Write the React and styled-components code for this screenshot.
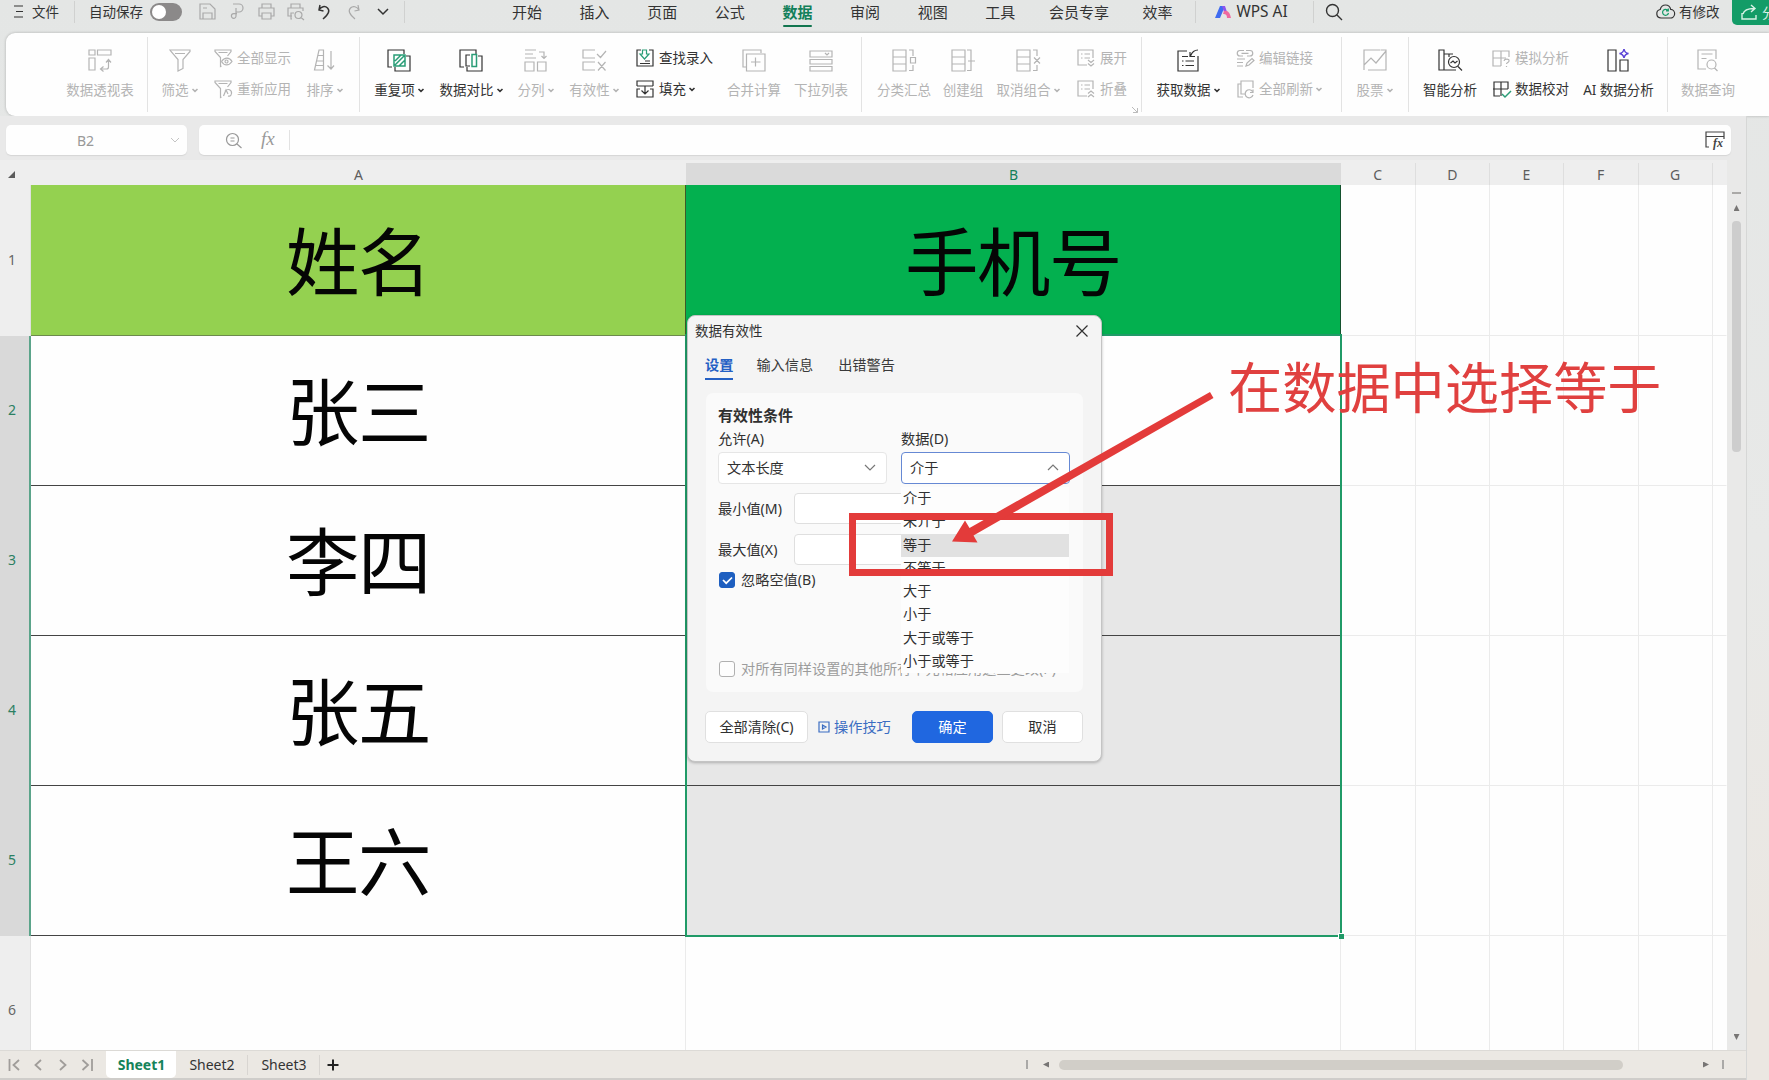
import React from "react";
import styled, { createGlobalStyle, css } from "styled-components";

const GlobalStyle = createGlobalStyle`
  * {
    box-sizing: border-box;
  }

  body {
    margin: 0;
    overflow: hidden;
    font-family: "Noto Sans", "Noto Sans CJK SC", sans-serif;
    color: #333;
  }
`;

const icons = {
  menu: <path d="M1 2h9M3 7.5h7M1 13h9" />,
  save: <path d="M1 1h10l5 5v10H1zM4 16v-6h9v6M4 5h4" />,
  brush: <path d="M4 1h6a4 4 0 0 1 0 8H7M7 5v8a2.3 2.3 0 1 1-2.3-2.3H8" />,
  print: <path d="M4 5V1h9v4M4 13H1V5h15v8h-3M4 10h9v6H4z" />,
  preview: (
    <path d="M4 5V1h9v4M5 13H1V5h15v3M5 16H4v-6h3M15 12a3.5 3.5 0 1 1-7 0a3.5 3.5 0 0 1 7 0M14 14.5l3 2.5" />
  ),
  undo: <path d="M3 1L2 6l4.5 1M2 6c2-3.5 6-4.5 8.5-2s1.5 6-4.5 11" />,
  redo: <path d="M11 1l1 5-4.5 1M12 6c-2-3.5-6-4.500-8.500-2s-1.500 6 4.500 11" />,
  down: <path d="M1 5l5 5 5-5" />,
  up: <path d="M1 10l5-5 5 5" />,
  search: <path d="M13.5 7.5a6 6 0 1 1-12 0a6 6 0 0 1 12 0M12 12l5 5" />,
  zoomOut: (
    <path d="M13.5 7.5a6 6 0 1 1-12 0a6 6 0 0 1 12 0M12 12l4.5 4M5.5 6h4M5.5 9h4" />
  ),
  cloud: (
    <>
      <path d="M5 15a4.3 4.3 0 0 1-.8-8.5C5 3.5 7 2 9.5 2s4.6 1.6 5.200 4.400A4.300 4.300 0 0 1 14 15z" />
      <path stroke="#159a68" d="M12 7.5A3 3 0 1 0 12.5 10M12.3 5.5v2.3h-2.3" />
    </>
  ),
  share: <path d="M2 9v6h14v-4M3 10c1-4 5-5.5 11-5.5M11 1l4 3.5L11 8" />,
  pivot: (
    <path d="M1 2h6v5H1zM9.5 2H23v5H9.5zM1 10h6v12H1zM20.5 12v7a2 2 0 0 1-2 2H13M18 14.5l2.5-3 2.5 3M15.5 18.5L12.5 21l3 2.5" />
  ),
  filter: <path d="M2 2h20v1.5l-7 8v9L10 23V11.5l-7-8zM7 5.5h10" />,
  filterEye: (
    <path d="M7.5 17l-1 .5v-9L1 2.5V1h16v1.5L13.5 7M4.5 3.5h9M7.500 12.500c3-4.500 8-4.500 10.500 0c-3 4.500-8 4.500-10.500 0M14 12.5a1.5 1.5 0 1 1-3 0a1.5 1.5 0 0 1 3 0" />
  ),
  filterRe: (
    <path d="M7.5 17l-1 .5v-9L1 2.5V1h16v1.5L13.5 7M4.5 3.5h9M9.500 16l2.500-6 2 4M11 11c3-3 7-1 6.500 2.500S14 16 14 16" />
  ),
  sort: (
    <path d="M6 2h4.5v20H1.5zM5 7.5h5.5M3.5 13h7M2.5 17.5h8M18 3v18M14.500 17.500L18 21l3-3.500" />
  ),
  dup: (
    <>
      <path d="M5 19H1V2h16v4M8 19v4h15V8h-4" />
      <path stroke="#2a9d77" strokeWidth="1.500" d="M7 7h11v11H7zM8 13l6-6M8 17l9-9M12 18l6-6" />
    </>
  ),
  compare: (
    <>
      <path d="M5 19H1V2h16v4M11 7H7v11h4M8 19v4h15V8h-4" />
      <path stroke="#2a9d77" strokeWidth="1.500" d="M13 6.500h4.500v12H13z" />
    </>
  ),
  split: (
    <path d="M1 2h11M1 6h8M1 10h11M15 4h5v6M17.5 8l2.5 2.5L22.5 8M1 14h9v9H1zM13.5 14H22v9h-8.5z" />
  ),
  valid: <path d="M13 2H1v8h12M15 6l3.5 3.5L24 3M13 14H1v8h12M16 14l7.5 8.5M23.5 14L16 22.5" />,
  lookup: (
    <>
      <path d="M5 1H1v16h16V1h-4M4 14.5h10M9 12h5" />
      <path stroke="#2a9d77" d="M6.5 1h4v4H13L8.500 10 4 5h2.500z" />
    </>
  ),
  fill: <path d="M1 6V1h16v5M1 6h16M4 9H1v8h16V9h-3M9 6v8M5.500 10.500L9 14l3.500-3.500" />,
  merge: <path d="M4 19H1V2h18v3M4.5 6H23v17H4.5zM13.5 9.5v9M9 14h9.5" />,
  list: <path d="M1 3h22v6H1zM1 11.5h22V16H1zM1 18.5h22V23H1zM16 5l2 2 2-2" />,
  subtotal: (
    <path d="M1 2h13v21H1zM1 9h13M1 16h13M17 2h4v6M21 17v5.5h-4M18.5 9.500h5v5.500h-5z" />
  ),
  group: <path d="M1 2h13v21H1zM1 9h13M1 16h13M16 2h4v20.5h-4M17 13h7" />,
  ungroup: (
    <path d="M1 2h13v21H1zM1 9h13M1 16h13M17 2h4v6M21 17v5.5h-4M18 9.5l6 6M24 9.5l-6 6" />
  ),
  expand: (
    <path d="M10 16H1V1h15v8M4 5h1.5M7.5 5H13M4 9h1.5M7.5 9H13M11 11l3 2.5 3-2.5M11 14.500l3 2.500 3-2.500" />
  ),
  collapse: (
    <path d="M10 16H1V1h15v8M4 5h1.5M7.5 5H13M4 9h1.5M7.5 9H13M11 13.5l3-2.5 3 2.5M11 17l3-2.5 3 2.5" />
  ),
  fetch: (
    <path d="M11 3H2v20h20V8M6 8.5h6M6 13h1.5M9.5 13H18M6 17.5h1.5M9.5 17.5H18M22 2c-4 0-6 2-7.500 6M14 4v4.500h5" />
  ),
  link: (
    <path d="M8 1.500H4a2.700 2.700 0 0 0 0 5.500h3M10 1.500h4A2.700 2.700 0 0 1 14 7h-3M5.500 4.300h7M1 10h8M1 13.5h6M1 17h6M10 17l1-3 5-4.5 2 2-5 4.5z" />
  ),
  refresh: (
    <path d="M5 4H2v13h5M9 14H5V1h12v7M16.5 11.5A4 4 0 1 0 17 15M17 9.5v3h-3" />
  ),
  stock: <path d="M17 2H1v20M5 22h18V8M1 17l7-7 5 5L23 3M17.5 2H23v6" />,
  smart: (
    <path d="M1 2h5v20H1zM6 6h5v3M6 22h12M11 6h4M21.500 14a5.500 5.500 0 1 1-11 0a5.500 5.500 0 0 1 11 0M20 18.500l4 4M12.500 15l2.500-2 2 2 2.500-2" />
  ),
  simulate: (
    <path d="M9 17H1V2h16v6M9 2v15M1 9h13M12 12c.5-2.500 5.500-2.500 5 0c0 1.500-2.500 1.500-2.500 3M14.500 17v1" />
  ),
  check: (
    <>
      <path d="M8 16H2V2h14v7M9 2v14M1 9h15" />
      <path stroke="#2a9d77" strokeWidth="1.500" d="M10 14l3 3 6-6" />
    </>
  ),
  aiData: (
    <>
      <path d="M1 2h8v21H1zM13 12h8v11h-8z" />
      <path
        stroke="#5b43d6"
        strokeWidth="1.500"
        d="M17 1c.5 3 1.500 4 4.500 4.500c-3 .5-4 1.500-4.500 4.500c-.5-3-1.500-4-4.500-4.500c3-.5 4-1.500 4.500-4.500z"
      />
    </>
  ),
  query: (
    <path d="M10 21H2V2h18v9M5.5 6h11M5.5 10.5h5M20 16.5a4.5 4.5 0 1 1-9 0a4.5 4.5 0 0 1 9 0M18.5 20l3 3" />
  ),
  close: <path d="M1.5 1.5l11 11M12.5 1.5l-11 11" />,
  tick: <path strokeWidth="1.7" d="M3 7l3.2 3.2L12 4.5" />,
  play: <path d="M1 1h10v10H1zM4.5 4v4L8 6z" />,
  launcher: <path d="M1 1l5.5 5.5M6.5 2v4.5H2" />,
  first: <path d="M1.5 1v12M11 2L5.5 7 11 12" />,
  prev: <path d="M8 2L2.5 7 8 12" />,
  next: <path d="M3 2l5.5 5L3 12" />,
  last: <path d="M1.5 2L7 7l-5.5 5M11 1v12" />,
  plus: <path d="M6 .5v11M.5 6h11" />,
};

const Svg = styled.svg`
  display: block;
  flex: none;
  fill: none;
  stroke: currentColor;
  stroke-width: ${(props) => props.$stroke || 1.2};
  overflow: visible;
`;

const Icon = ({ name, size = 18, height, stroke }) => (
  <Svg
    width={size}
    height={height || size}
    viewBox={`0 0 ${size} ${height || size}`}
    $stroke={stroke}
  >
    {icons[name]}
  </Svg>
);

const Window = styled.div`
  position: relative;
  width: 1769px;
  height: 1080px;
  overflow: hidden;
  display: flex;
  flex-direction: column;
  background: linear-gradient(#e4e6e5, #e8e9e8 50%, #ebe7e2 90%);
`;

/* ---------- title bar ---------- */

const TitleBar = styled.header`
  display: flex;
  align-items: center;
  height: 23px;
  margin-bottom: 10px;
  padding-left: 13px;
  font-size: 13.5px;
  line-height: 20px;
  white-space: nowrap;
  flex: none;
`;

const TitleItem = styled.div`
  display: flex;
  align-items: center;
  flex: none;
  width: ${(props) => props.$w}px;
  color: ${(props) => (props.$muted ? "#a9a9a9" : "#333")};
  gap: ${(props) => props.$gap ?? 8}px;
`;

const TitleRule = styled.i`
  width: 1px;
  height: 22px;
  background: #d0d1d0;
  margin: 0 ${(props) => props.$r}px 0 ${(props) => props.$l || 0}px;
`;

const Toggle = styled.span`
  width: 32px;
  height: 18px;
  border-radius: 9px;
  background: #8b8989;
  padding: 2px;

  &::before {
    content: "";
    display: block;
    width: 14px;
    height: 14px;
    border-radius: 50%;
    background: #fff;
  }
`;

const MenuTabs = styled.nav`
  display: flex;
  gap: 37.6px;
  font-size: 15px;
  margin-left: 107px;
`;

const MenuTab = styled.span`
  position: relative;
  color: #333;
  margin-left: ${(props) => props.$ml || 0}px;

  ${(props) =>
    props.$active &&
    css`
      color: #12805a;
      font-weight: 700;

      &::after {
        content: "";
        position: absolute;
        left: 1px;
        right: 0;
        bottom: -5px;
        height: 2px;
        border-radius: 1px;
        background: #12754f;
      }
    `}
`;

const AiName = styled.span`
  font-size: 15.4px;
`;

const ShareButton = styled.div`
  align-self: flex-start;
  height: 25px;
  width: 37px;
  flex: none;
  margin-left: 13px;
  padding-left: 8px;
  display: flex;
  align-items: center;
  gap: 5px;
  overflow: hidden;
  color: #d8f2e6;
  background: #139c67;
  border-radius: 0 0 0 5px;
`;

/* ---------- ribbon ---------- */

const Ribbon = styled.section`
  display: flex;
  align-items: stretch;
  flex: none;
  height: 83px;
  margin-left: 6px;
  padding: 4px 0;
  background: #fefefe;
  border-radius: 9px 0 0 9px;
  box-shadow: 0 0 3px rgba(0, 0, 0, 0.25);
`;

const Group = styled.div`
  position: relative;
  display: flex;
  flex: none;
  width: ${(props) => props.$w}px;
  border-right: 1px solid #e3e3e3;

  &:last-child {
    border-right: 0;
  }
`;

const Tool = styled.div`
  display: flex;
  flex-direction: column;
  align-items: center;
  flex: none;
  width: ${(props) => props.$w}px;
  margin-left: ${(props) => props.$ml}px;
  padding-top: 11px;
  gap: 9px;
  color: ${(props) => (props.$on ? "#333" : "#b4b4b4")};
`;

const ToolStack = styled.div`
  display: flex;
  flex-direction: column;
  flex: none;
  width: ${(props) => props.$w}px;
  margin-left: ${(props) => props.$ml}px;
  padding-top: 11px;
  gap: 11px;
`;

const StackRow = styled.div`
  display: flex;
  align-items: center;
  height: 20px;
  gap: 5px;
  color: ${(props) => (props.$on ? "#333" : "#b4b4b4")};
`;

const ToolLabel = styled.span`
  display: flex;
  align-items: center;
  gap: 3px;
  font-size: 13.5px;
  line-height: 18px;
  white-space: nowrap;
`;

const Caret = () => (
  <Svg width="6" height="6" viewBox="0 0 6 6" $stroke={1.6}>
    <path d="M.5 2L3 4.3 5.5 2" />
  </Svg>
);

const Launcher = styled.span`
  position: absolute;
  right: 3px;
  bottom: -1px;
  color: #bbb;
`;

const ribbonGroups = [
  { w: 142, tools: [{ ml: 60, w: 68, icon: "pivot", label: "数据透视表" }] },
  {
    w: 212,
    tools: [
      { ml: 13, w: 37, icon: "filter", label: "筛选", caret: true },
      {
        ml: 16,
        w: 79,
        rows: [
          { icon: "filterEye", label: "全部显示" },
          { icon: "filterRe", label: "重新应用" },
        ],
      },
      { ml: 13, w: 37, icon: "sort", label: "排序", caret: true },
    ],
  },
  {
    w: 502,
    tools: [
      { ml: 14, w: 50, icon: "dup", label: "重复项", caret: true, on: true },
      { ml: 15, w: 64, icon: "compare", label: "数据对比", caret: true, on: true },
      { ml: 14, w: 37, icon: "split", label: "分列", caret: true },
      { ml: 15, w: 50, icon: "valid", label: "有效性", caret: true },
      {
        ml: 17,
        w: 76,
        rows: [
          { icon: "lookup", label: "查找录入", on: true },
          { icon: "fill", label: "填充", caret: true, on: true },
        ],
      },
      { ml: 15, w: 54, icon: "merge", label: "合并计算" },
      { ml: 13, w: 54, icon: "list", label: "下拉列表" },
    ],
  },
  {
    w: 280,
    launcher: true,
    tools: [
      { ml: 15, w: 54, icon: "subtotal", label: "分类汇总" },
      { ml: 12, w: 40, icon: "group", label: "创建组" },
      { ml: 13, w: 64, icon: "ungroup", label: "取消组合", caret: true },
      {
        ml: 17,
        w: 50,
        rows: [
          { icon: "expand", label: "展开" },
          { icon: "collapse", label: "折叠" },
        ],
      },
    ],
  },
  {
    w: 200,
    tools: [
      { ml: 14, w: 64, icon: "fetch", label: "获取数据", caret: true, on: true },
      {
        ml: 16,
        w: 90,
        rows: [
          { icon: "link", label: "编辑链接" },
          { icon: "refresh", label: "全部刷新", caret: true },
        ],
      },
    ],
  },
  { w: 67, tools: [{ ml: 14, w: 37, icon: "stock", label: "股票", caret: true }] },
  {
    w: 259,
    tools: [
      { ml: 14, w: 54, icon: "smart", label: "智能分析", on: true },
      {
        ml: 15,
        w: 77,
        rows: [
          { icon: "simulate", label: "模拟分析" },
          { icon: "check", label: "数据校对", on: true },
        ],
      },
      { ml: 14, w: 71, icon: "aiData", label: "AI 数据分析", on: true },
    ],
  },
  { w: 101, tools: [{ ml: 13, w: 54, icon: "query", label: "数据查询" }] },
];

/* ---------- formula bar ---------- */

const Workspace = styled.div`
  width: 1747px;
  flex: 1;
  min-height: 0;
  display: flex;
  flex-direction: column;
  border-right: 1px solid #d6d7d6;
  background: #ededed;
`;

const FormulaBar = styled.div`
  display: flex;
  gap: 12px;
  flex: none;
  height: 44px;
  padding: 9px 15px 5px 6px;
  background: #e9e9e9;
`;

const FormulaBox = styled.div`
  display: flex;
  align-items: center;
  width: ${(props) => props.$w}px;
  flex: ${(props) => (props.$w ? "none" : 1)};
  background: #fefefe;
  border-radius: 5px;
  box-shadow: 0 1px 1px #d5d5d5;
  padding: 0 ${(props) => props.$pr}px 0 ${(props) => props.$pl}px;
  color: #999;
  font-size: 14px;
`;

const NameArrow = styled(Svg)`
  color: #c4c4c4;
`;

const Fx = styled.span`
  font-family: "Liberation Serif", serif;
  font-style: italic;
  font-size: 19px;
  line-height: 20px;
  margin: 0 14px 2px 19px;
`;

const FormulaRule = styled.i`
  width: 1px;
  height: 20px;
  background: #e2e2e2;
`;

const Spacer = styled.span`
  flex: 1;
`;

/* ---------- sheet ---------- */

const columnTemplate = "31px 655px 655px 74.5px 74.5px 74px 74.5px 74px 1fr";

const SheetArea = styled.div`
  display: flex;
  flex: 1;
  min-height: 0;
`;

const Sheet = styled.div`
  position: relative;
  width: 1727px;
  overflow: hidden;
  background: #fefefe;
`;

const HeadRow = styled.div`
  display: grid;
  grid-template-columns: ${columnTemplate};
  height: 25px;
  background: #eee;
`;

const HeadCell = styled.div`
  display: flex;
  align-items: center;
  justify-content: center;
  margin-top: 3px;
  font-size: 14px;
  color: ${(props) => (props.$active ? "#16805a" : "#5d5d5d")};
  background: ${(props) => (props.$active ? "#dadada" : "transparent")};
  border-right: ${(props) => (props.$rule ? "1px solid #dedede" : "0")};
`;

const SelectAll = styled.div`
  width: 0;
  height: 0;
  margin: 11px 0 0 8px;
  border-bottom: 7px solid #5b5b5b;
  border-left: 7px solid transparent;
`;

const Row = styled.div`
  display: grid;
  grid-template-columns: ${columnTemplate};
  height: ${(props) => (props.$first ? 151 : 150)}px;
`;

const RowHead = styled.div`
  display: flex;
  align-items: center;
  padding: 0 0 3px 8px;
  font-size: 14px;
  color: ${(props) => (props.$active ? "#2b7f62" : "#666")};
  background: ${(props) => (props.$active ? "#d9d9d9" : "#eee")};
  border-right: ${(props) =>
    props.$active ? "2px solid #5ba48a" : "1px solid #e0e0e0"};
`;

const Cell = styled.div`
  display: flex;
  align-items: center;
  justify-content: center;
  padding-bottom: 5px;
  font-family: "Noto Sans CJK SC", sans-serif;
  font-size: 73.5px;
  letter-spacing: -1.5px;
  line-height: 100px;
  color: #050505;
  background: ${(props) => props.$bg || "#fefefe"};
  border-right: 1px solid ${(props) => props.$side || "#ebebeb"};
  border-bottom: 1px solid ${(props) => props.$edge || "#ebebeb"};
`;

const Selection = styled.div`
  position: absolute;
  left: 685px;
  top: 174px;
  width: 657px;
  height: 603px;
  border: 2px solid #209a67;

  &::after {
    content: "";
    position: absolute;
    right: -4px;
    bottom: -4px;
    width: 5px;
    height: 5px;
    border: solid #fff;
    border-width: 1px 0 0 1px;
    background: #209a67;
  }
`;

const VScroll = styled.div`
  width: 19px;
  padding-top: 32px;
  display: flex;
  flex-direction: column;
  align-items: center;
  background: #e9e9e8;
`;

const SplitMark = styled.i`
  flex: none;
  width: ${(props) => props.$w}px;
  height: ${(props) => props.$h}px;
  background: #aaa9a7;
`;

const VThumb = styled.div`
  width: 9px;
  height: 231px;
  margin: 10px 0 auto;
  border-radius: 4px;
  background: #cdcdcd;
`;

const Triangle = styled.span`
  width: 6px;
  height: 6px;
  flex: none;
  background: #777574;
  margin: ${(props) => props.$m || 0};
  clip-path: polygon(${(props) => props.$shape});
`;

const SheetBar = styled.footer`
  display: flex;
  align-items: center;
  flex: none;
  height: 30px;
  padding: 0 22px 0 8px;
  border-top: 1px solid #dcdad6;
  border-bottom: 2px solid #cfcdca;
  background: #ebe8e3;
  font-size: 14px;
`;

const NavArrows = styled.div`
  display: flex;
  align-items: center;
  gap: 13px;
  width: 98px;
  color: #a09d9a;
`;

const SheetTab = styled.div`
  display: flex;
  align-items: center;
  justify-content: center;
  width: ${(props) => props.$w}px;
  height: ${(props) => (props.$active ? "27px" : "20px")};
  padding-left: 1px;
  color: ${(props) => (props.$active ? "#15835a" : "#333")};
  font-weight: ${(props) => (props.$active ? 700 : 400)};
  background: ${(props) => (props.$active ? "#fff" : "transparent")};
  border-right: ${(props) => (props.$active ? "0" : "1px solid #d8d5d1")};
  border-radius: ${(props) => (props.$active ? "0 0 5px 5px" : "0")};
`;

const AddSheet = styled.div`
  padding-left: 7px;
  color: #222;
`;

const HThumb = styled.div`
  width: 564px;
  height: 10px;
  border-radius: 5px;
  background: #d1cec8;
  margin-right: 80px;
`;

/* ---------- dialog ---------- */

const Dialog = styled.div`
  position: absolute;
  left: 687px;
  top: 315px;
  width: 415px;
  height: 447px;
  display: flex;
  flex-direction: column;
  background: #f4f4f4;
  border: 1px solid #c4c4c4;
  border-radius: 8px;
  box-shadow: 0 1px 3px rgba(0, 0, 0, 0.25);
  font-size: 14.2px;
  line-height: 20px;
  color: #303030;
  white-space: nowrap;
`;

const DialogTitle = styled.div`
  display: flex;
  align-items: center;
  justify-content: space-between;
  height: 29px;
  padding: 0 12px 0 7px;
  font-size: 13.5px;
`;

const DialogTabs = styled.div`
  display: flex;
  gap: 23px;
  height: 48px;
  padding: 10px 0 0 17px;
`;

const DialogTab = styled.span`
  height: 25px;
  margin-right: ${(props) => props.$mr || 0}px;
  color: ${(props) => (props.$active ? "#2460c4" : "#3a3a3a")};
  font-weight: ${(props) => (props.$active ? 700 : 400)};
  border-bottom: 2px solid ${(props) => (props.$active ? "#2460c4" : "transparent")};
`;

const Panel = styled.div`
  position: relative;
  display: flex;
  flex-direction: column;
  height: 299px;
  margin: 0 18px;
  padding: 12px 12px 0;
  background: #fafafa;
  border-radius: 7px;
`;

const PanelTitle = styled.b`
  height: 24px;
  font-size: 15px;
`;

const FieldPair = styled.div`
  display: grid;
  grid-template-columns: 169px 169px;
  column-gap: 14px;
`;

const Field = styled.label`
  display: flex;
  flex-direction: column;
  gap: 3px;
`;

const SelectBox = styled.div`
  display: flex;
  align-items: center;
  justify-content: space-between;
  height: 32px;
  padding: 0 10px 1px 8px;
  background: #fff;
  border: 1px solid ${(props) => (props.$open ? "#6689d4" : "#e6e6e6")};
  border-radius: 4px;

  svg {
    color: #777;
  }
`;

const InputRow = styled.div`
  display: grid;
  grid-template-columns: 76px 274px;
  align-items: center;
  margin-top: ${(props) => props.$mt}px;
`;

const InputBox = styled.div`
  height: 31px;
  background: #fff;
  border: 1px solid #dfdfdf;
  border-radius: 4px;
`;

const CheckRow = styled.div`
  display: flex;
  align-items: center;
  gap: 6px;
  padding-left: 1px;
  margin-top: ${(props) => props.$mt}px;
  color: ${(props) => (props.$muted ? "#9c9c9c" : "#333")};
`;

const CheckBox = styled.span`
  width: 16px;
  height: 16px;
  flex: none;
  border-radius: 3px;
  color: #fff;
  border: 1px solid ${(props) => (props.$checked ? "#1e5fc0" : "#b0b0b0")};
  background: ${(props) => (props.$checked ? "#1e5fc0" : "#fdfdfd")};
`;

const OptionList = styled.div`
  position: absolute;
  left: 195px;
  top: 94px;
  width: 168px;
  background: #fdfdfd;
`;

const Option = styled.div`
  height: 23.3px;
  padding-left: 2px;
  line-height: 22px;
  background: ${(props) => (props.$active ? "#e1e1e1" : "transparent")};
`;

const Actions = styled.div`
  display: flex;
  align-items: center;
  padding: 19px 0 0 17px;
`;

const Button = styled.button`
  width: ${(props) => props.$w}px;
  height: 32px;
  padding: 0;
  font: inherit;
  color: ${(props) => (props.$primary ? "#fff" : "#303030")};
  background: ${(props) => (props.$primary ? "#2067e0" : "#fff")};
  border: 1px solid ${(props) => (props.$primary ? "#2067e0" : "#e0e0e0")};
  border-radius: 5px;

  & + & {
    margin-left: 9px;
  }
`;

const TipsLink = styled.span`
  display: flex;
  align-items: center;
  gap: 4px;
  width: 94px;
  margin-left: 10px;
  color: #3b6dc2;
`;

/* ---------- annotation ---------- */

const Highlight = styled.div`
  position: absolute;
  left: 849px;
  top: 513px;
  width: 264px;
  height: 63px;
  border: 7px solid #e33b3a;
`;

const ArrowLayer = styled.svg`
  position: absolute;
  left: 940px;
  top: 380px;
`;

const Note = styled.div`
  position: absolute;
  left: 1228px;
  top: 345px;
  font-family: "Noto Sans CJK SC", sans-serif;
  font-size: 54.2px;
  line-height: 80px;
  color: #e0403f;
  white-space: nowrap;
`;

const menuTabs = [
  { title: "开始" },
  { title: "插入" },
  { title: "页面" },
  { title: "公式" },
  { title: "数据", active: true },
  { title: "审阅" },
  { title: "视图" },
  { title: "工具" },
  { title: "会员专享", ml: -4 },
  { title: "效率", ml: -4 },
];
const names = ["姓名", "张三", "李四", "张五", "王六", ""];
const columns = ["A", "B", "C", "D", "E", "F", "G", ""];
const options = [
  "介于",
  "未介于",
  "等于",
  "不等于",
  "大于",
  "小于",
  "大于或等于",
  "小于或等于",
];

const AiLogo = () => (
  <svg width="17" height="14" viewBox="0 0 17 14">
    <path d="M5 1h5L5 13H0z" fill="#3f6bf0" />
    <path d="M7 1h3l2 6H9z" fill="#8b54ee" />
    <path d="M9 6c4-1 6 2 7 7h-4c0-3-1-4-4-4z" fill="#ee6aa0" />
  </svg>
);

const TopMenu = () => (
  <TitleBar>
    <TitleItem $w={61}>
      <Icon name="menu" size={11} height={15} />
      文件
    </TitleItem>
    <TitleRule $r={14} />
    <TitleItem $w={110} $gap={7}>
      自动保存
      <Toggle />
    </TitleItem>
    <TitleItem $w={30} $muted>
      <Icon name="save" size={17} />
    </TitleItem>
    <TitleItem $w={29} $muted>
      <Icon name="brush" size={17} />
    </TitleItem>
    <TitleItem $w={29} $muted>
      <Icon name="print" size={17} />
    </TitleItem>
    <TitleItem $w={30} $muted>
      <Icon name="preview" size={17} />
    </TitleItem>
    <TitleItem $w={30}>
      <Icon name="undo" size={14} height={16} stroke={1.5} />
    </TitleItem>
    <TitleItem $w={30} $muted>
      <Icon name="redo" size={14} height={16} />
    </TitleItem>
    <TitleItem $w={27}>
      <Icon name="down" size={12} height={15} stroke={1.5} />
    </TitleItem>
    <TitleRule $r={0} />
    <MenuTabs>
      {menuTabs.map((tab) => (
        <MenuTab key={tab.title} $active={tab.active} $ml={tab.ml}>
          {tab.title}
        </MenuTab>
      ))}
    </MenuTabs>
    <TitleRule $l={22} $r={19} />
    <TitleItem $w={98} $gap={5}>
      <AiLogo />
      <AiName>WPS AI</AiName>
    </TitleItem>
    <TitleRule $r={11} />
    <TitleItem $w={18}>
      <Icon name="search" stroke={1.4} />
    </TitleItem>
    <Spacer />
    <TitleItem $w={63} $gap={5}>
      <Icon name="cloud" size={18} />
      有修改
    </TitleItem>
    <ShareButton>
      <Icon name="share" size={17} stroke={1.4} />
      分享
    </ShareButton>
  </TitleBar>
);

const RibbonTool = ({ tool }) => {
  if (tool.rows) {
    return (
      <ToolStack $ml={tool.ml} $w={tool.w}>
        {tool.rows.map((row) => (
          <StackRow key={row.label} $on={row.on}>
            <Icon name={row.icon} size={18} />
            <ToolLabel>
              {row.label}
              {row.caret && <Caret />}
            </ToolLabel>
          </StackRow>
        ))}
      </ToolStack>
    );
  }

  return (
    <Tool $ml={tool.ml} $w={tool.w} $on={tool.on}>
      <Icon name={tool.icon} size={24} />
      <ToolLabel>
        {tool.label}
        {tool.caret && <Caret />}
      </ToolLabel>
    </Tool>
  );
};

const cellColors = (row) => {
  if (row === 0) {
    return {
      a: { $bg: "#94d150", $side: "#3f5a28", $edge: "#6c8a4c" },
      b: { $bg: "#03b04f", $side: "#14512e" },
    };
  }
  if (row === 5) return { a: {}, b: {} };
  return {
    a: { $edge: "#444" },
    b: { $bg: row === 1 ? "#fefefe" : "#e7e7e7", $edge: "#444" },
  };
};

const Spreadsheet = () => (
  <Sheet>
    <HeadRow>
      <SelectAll />
      {columns.map((col, idx) => (
        <HeadCell key={idx} $active={col === "B"} $rule={idx > 1 && idx < 7}>
          {col}
        </HeadCell>
      ))}
    </HeadRow>
    {names.map((name, row) => {
      const colors = cellColors(row);
      return (
        <Row key={row} $first={row === 0}>
          <RowHead $active={row > 0 && row < 5}>{row + 1}</RowHead>
          <Cell {...colors.a}>{name}</Cell>
          <Cell {...colors.b}>{row === 0 ? "手机号" : ""}</Cell>
          {columns.slice(2).map((col, idx) => (
            <Cell key={idx} $side={idx === 5 ? "transparent" : undefined} />
          ))}
        </Row>
      );
    })}
    <Selection />
  </Sheet>
);

const ValidationDialog = () => (
  <Dialog>
    <DialogTitle>
      数据有效性
      <Icon name="close" size={14} />
    </DialogTitle>
    <DialogTabs>
      <DialogTab $active>设置</DialogTab>
      <DialogTab $mr={2}>输入信息</DialogTab>
      <DialogTab>出错警告</DialogTab>
    </DialogTabs>
    <Panel>
      <PanelTitle>有效性条件</PanelTitle>
      <FieldPair>
        <Field>
          允许(A)
          <SelectBox>
            文本长度
            <Icon name="down" size={12} height={15} />
          </SelectBox>
        </Field>
        <Field>
          数据(D)
          <SelectBox $open>
            介于
            <Icon name="up" size={12} height={15} />
          </SelectBox>
        </Field>
      </FieldPair>
      <InputRow $mt={9}>
        最小值(M)
        <InputBox />
      </InputRow>
      <InputRow $mt={10}>
        最大值(X)
        <InputBox />
      </InputRow>
      <CheckRow $mt={5}>
        <CheckBox $checked>
          <Icon name="tick" size={14} />
        </CheckBox>
        忽略空值(B)
      </CheckRow>
      <CheckRow $mt={69} $muted>
        <CheckBox />
        对所有同样设置的其他所有单元格应用这些更改(P)
      </CheckRow>
      <OptionList>
        {options.map((option) => (
          <Option key={option} $active={option === "等于"}>
            {option}
          </Option>
        ))}
      </OptionList>
    </Panel>
    <Actions>
      <Button $w={103}>全部清除(C)</Button>
      <TipsLink>
        <Icon name="play" size={12} />
        操作技巧
      </TipsLink>
      <Button $w={81} $primary>
        确定
      </Button>
      <Button $w={81}>取消</Button>
    </Actions>
  </Dialog>
);

const App = () => {
  return (
    <Window>
      <GlobalStyle />
      <TopMenu />

      <Ribbon>
        {ribbonGroups.map((group, idx) => (
          <Group key={idx} $w={group.w}>
            {group.tools.map((tool, i) => (
              <RibbonTool key={i} tool={tool} />
            ))}
            {group.launcher && (
              <Launcher>
                <Icon name="launcher" size={7} stroke={1} />
              </Launcher>
            )}
          </Group>
        ))}
      </Ribbon>

      <Workspace>
        <FormulaBar>
          <FormulaBox $w={181} $pl={71} $pr={7}>
            B2
            <Spacer />
            <NameArrow width="10" height="8" viewBox="0 0 10 8" $stroke={1}>
              <path d="M1 2l4 4 4-4" />
            </NameArrow>
          </FormulaBox>
          <FormulaBox $pl={26} $pr={6}>
            <Icon name="zoomOut" size={17} />
            <Fx>fx</Fx>
            <FormulaRule />
            <Spacer />
            <svg
              width="20"
              height="20"
              viewBox="0 0 20 20"
              fill="none"
              stroke="#444"
              strokeWidth="1.2"
            >
              <path d="M4 17H1V2h18v7M1 6.5h18" />
              <text
                x="8"
                y="17"
                fill="#444"
                stroke="none"
                fontFamily="Liberation Serif, serif"
                fontStyle="italic"
                fontWeight="700"
                fontSize="12"
              >
                fx
              </text>
            </svg>
          </FormulaBox>
        </FormulaBar>

        <SheetArea>
          <Spreadsheet />
          <VScroll>
            <SplitMark $w={9} $h={2} />
            <Triangle $m="11px 0 0" $shape="50% 0, 100% 100%, 0 100%" />
            <VThumb />
            <Triangle $m="0 0 10px" $shape="0 0, 100% 0, 50% 100%" />
          </VScroll>
        </SheetArea>

        <SheetBar>
          <NavArrows>
            <Icon name="first" size={12} height={14} stroke={1.8} />
            <Icon name="prev" size={11} height={14} stroke={1.8} />
            <Icon name="next" size={11} height={14} stroke={1.8} />
            <Icon name="last" size={12} height={14} stroke={1.8} />
          </NavArrows>
          <SheetTab $w={70} $active>
            Sheet1
          </SheetTab>
          <SheetTab $w={72}>Sheet2</SheetTab>
          <SheetTab $w={72}>Sheet3</SheetTab>
          <AddSheet>
            <Icon name="plus" size={12} stroke={2} />
          </AddSheet>
          <Spacer />
          <SplitMark $w={2} $h={9} />
          <Triangle $m="0 10px 0 15px" $shape="100% 0, 100% 100%, 0 50%" />
          <HThumb />
          <Triangle $m="0 13px 0 0" $shape="0 0, 100% 50%, 0 100%" />
          <SplitMark $w={2} $h={9} />
        </SheetBar>
      </Workspace>

      <ValidationDialog />
      <Highlight />
      <ArrowLayer width="280" height="170" viewBox="0 0 280 170">
        <path
          fill="#e33b3a"
          d="M12 161.5L25 140.5L29.5 148L270 12L273.5 18L33.5 155.5L37.5 162.5Z"
        />
      </ArrowLayer>
      <Note>在数据中选择等于</Note>
    </Window>
  );
};

export default App;
